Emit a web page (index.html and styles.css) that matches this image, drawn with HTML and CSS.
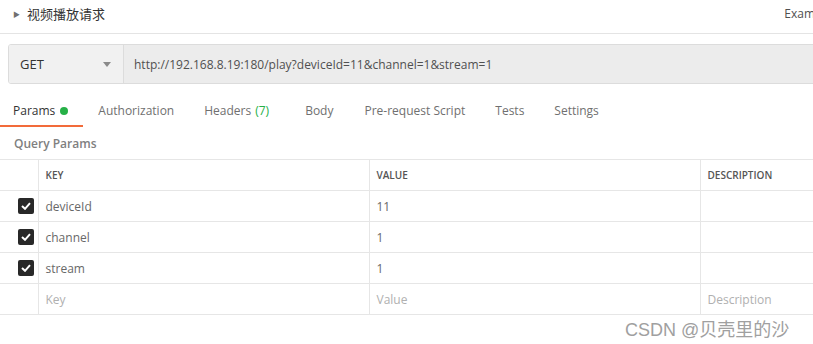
FILE: index.html
```html
<!DOCTYPE html>
<html lang="zh-CN">
  <head>
    <meta charset="UTF-8" />
    <title>视频播放请求</title>
    <link rel="stylesheet" href="styles.css">
  </head>
  <body>
    <header class="req-header">
      <div class="req-name">
        <span class="caret">&#9654;</span>
        <span class="title">视频播放请求</span>
      </div>
      <span class="examples">Exam</span>
    </header>

    <div class="url-bar">
      <div class="method">
        <span>GET</span>
        <svg class="arrow" width="8" height="5" viewBox="0 0 8 5"><path d="M0 0 H8 L4 5 Z" fill="#8a8a8a"/></svg>
      </div>
      <div class="url">http://192.168.8.19:180/play?deviceId=11&amp;channel=1&amp;stream=1</div>
    </div>

    <nav class="tabs">
      <span class="tab active">Params <i class="dot"></i></span>
      <span class="tab">Authorization</span>
      <span class="tab headers">Headers <em>(7)</em></span>
      <span class="tab">Body</span>
      <span class="tab">Pre-request Script</span>
      <span class="tab">Tests</span>
      <span class="tab">Settings</span>
    </nav>

    <div class="section-title">Query Params</div>

    <table class="params">
      <colgroup>
        <col class="c-check" />
        <col class="c-key" />
        <col class="c-value" />
        <col />
      </colgroup>
      <thead>
        <tr>
          <th></th>
          <th>KEY</th>
          <th>VALUE</th>
          <th>DESCRIPTION</th>
        </tr>
      </thead>
      <tbody>
        <tr>
          <td class="check"><span class="box"><svg width="10" height="8" viewBox="0 0 10 8"><path d="M1 4 L4 6.8 L9 1.2" fill="none" stroke="#fff" stroke-width="2"/></svg></span></td>
          <td>deviceId</td>
          <td>11</td>
          <td></td>
        </tr>
        <tr>
          <td class="check"><span class="box"><svg width="10" height="8" viewBox="0 0 10 8"><path d="M1 4 L4 6.8 L9 1.2" fill="none" stroke="#fff" stroke-width="2"/></svg></span></td>
          <td>channel</td>
          <td>1</td>
          <td></td>
        </tr>
        <tr>
          <td class="check"><span class="box"><svg width="10" height="8" viewBox="0 0 10 8"><path d="M1 4 L4 6.8 L9 1.2" fill="none" stroke="#fff" stroke-width="2"/></svg></span></td>
          <td>stream</td>
          <td>1</td>
          <td></td>
        </tr>
        <tr class="placeholder">
          <td></td>
          <td>Key</td>
          <td>Value</td>
          <td>Description</td>
        </tr>
      </tbody>
    </table>

    <div class="watermark">CSDN @贝壳里的沙</div>
  </body>
</html>
```

FILE: styles.css
```css
* {
  box-sizing: border-box;
  margin: 0;
  padding: 0;
}

body {
  font-family: "Open Sans", "Noto Sans CJK SC", sans-serif;
  font-size: 12px;
  color: #505050;
  background: #fff;
  width: 813px;
  height: 344px;
  overflow: hidden;
}

.req-header {
  height: 34px;
  display: flex;
  align-items: center;
  justify-content: space-between;
  border-bottom: 1px solid #e4e4e4;
  padding: 0 0 6px 13px;
  white-space: nowrap;
  overflow: hidden;
}

.req-name {
  display: flex;
  align-items: center;
  gap: 7px;
}

.caret {
  font-size: 7px;
  color: #707070;
}

.title {
  font-family: "Noto Sans CJK SC", sans-serif;
  font-size: 13px;
  color: #333;
}

.examples {
  font-size: 12px;
  color: #505050;
  margin-right: -2px;
}

.url-bar {
  display: flex;
  height: 40px;
  margin: 10px -10px 0 8px;
  border: 1px solid #dcdcdc;
  border-radius: 3px;
  overflow: hidden;
}

.method {
  width: 115px;
  display: flex;
  align-items: center;
  justify-content: space-between;
  padding: 0 12px 0 11px;
  background: #f1f1f1;
  border-right: 1px solid #dcdcdc;
  font-size: 13px;
  color: #333;
}

.url {
  flex: 1;
  display: flex;
  align-items: center;
  padding-left: 10px;
  background: #ececec;
  color: #505050;
}

.tabs {
  display: flex;
  height: 33px;
  margin-top: 10px;
  align-items: center;
  white-space: nowrap;
}

.tab {
  height: 100%;
  display: flex;
  align-items: center;
  padding: 2px 15px 0;
  font-size: 12px;
  color: #707070;
  border-bottom: 2px solid transparent;
}

.tab.active {
  padding-left: 13px;
  color: #333;
  border-bottom-color: #f26b3a;
}

.dot {
  display: inline-block;
  width: 8px;
  height: 8px;
  border-radius: 50%;
  background: #26b047;
  margin-left: 5px;
}

.tab em {
  font-style: normal;
  color: #26b047;
  margin-left: 4px;
}

.tab.headers {
  padding-right: 21px;
}

.tab.headers + .tab + .tab {
  padding-left: 16px;
}

.section-title {
  height: 32px;
  display: flex;
  align-items: center;
  padding-left: 14px;
  font-size: 12px;
  font-weight: 600;
  color: #808080;
}

.params {
  width: 900px;
  border-collapse: collapse;
  table-layout: fixed;
}

.c-check {
  width: 38px;
}

.c-key,
.c-value {
  width: 331px;
}

.params th,
.params td {
  height: 31px;
  border: 1px solid #e6e6e6;
  text-align: left;
  padding: 0 7px;
  font-weight: normal;
  white-space: nowrap;
}

.params tr > :first-child {
  border-left: none;
}

.params th {
  font-size: 10px;
  font-weight: 600;
  color: #555;
}

.params td {
  font-size: 12px;
  color: #686868;
}

.params td.check {
  padding: 0 0 0 18px;
}

.box {
  width: 16px;
  height: 16px;
  border-radius: 2px;
  background: #282828;
  display: flex;
  align-items: center;
  justify-content: center;
}

.placeholder td {
  color: #b0b0b0;
}

.watermark {
  margin: 0 0 0 625px;
  font-family: "Liberation Sans", "Noto Sans CJK SC", sans-serif;
  font-size: 18px;
  color: #a0a0a0;
  white-space: nowrap;
}
```
